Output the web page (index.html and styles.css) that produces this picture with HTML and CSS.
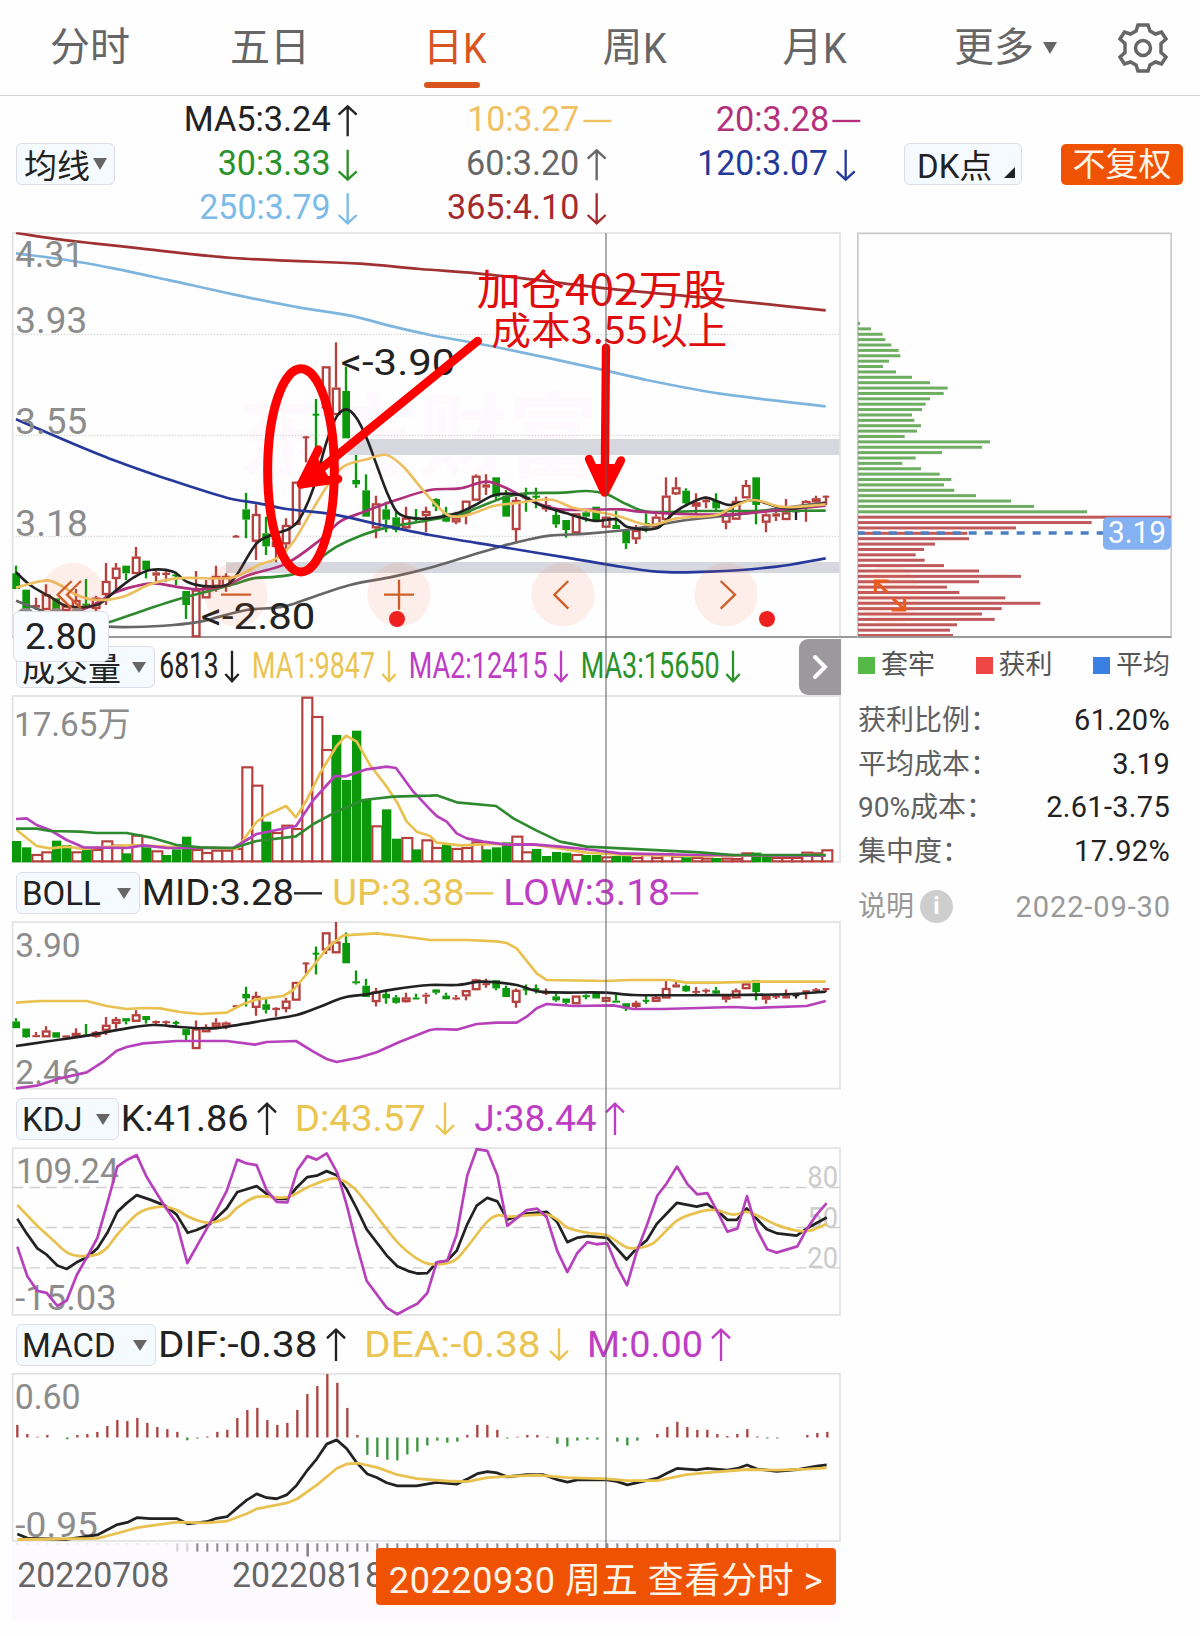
FILE: index.html
```html
<!DOCTYPE html>
<html lang="zh-CN">
<head>
	<meta charset="utf-8">
	<title>日K</title>
	<link rel="stylesheet" href="styles.css">
</head>
<body>
	<!-- arrows shared by all the legends -->
	<svg class="defs">
		<defs>
			<g id="up"><path d="M0 0V92M-27 27L0 2L27 27" /></g>
			<g id="down"><path d="M0 0V92M-27 65L0 90L27 65" /></g>
			<g id="downs"><path d="M0 0V94M-20 70L0 92L20 70" /></g>
			<g id="dash"><path d="M0 0H84" /></g>
		</defs>
	</svg>

	<nav class="tabs">
		<a class="tab">分时</a>
		<a class="tab">五日</a>
		<a class="tab active">日<span class="k">K</span></a>
		<a class="tab">周<span class="k">K</span></a>
		<a class="tab">月<span class="k">K</span></a>
		<a class="tab">更多<i class="caret small"></i></a>
		<a class="tab">
			<svg class="gear" viewBox="-25 -25 50 50">
				<path d="M-5 -23H5L7 -17L12.500 -14L18.500 -16L23 -9L18 -4.500V4.500L23 9L18.500 16L12.500 14L7 17L5 23H-5L-7 17L-12.500 14L-18.500 16L-23 9L-18 4.500V-4.500L-23 -9L-18.500 -16L-12.500 -14L-7 -17Z" />
				<circle r="7.500" />
			</svg>
		</a>
	</nav>

	<header class="ma_bar">
		<button class="pick ma_pick">均线<i class="caret"></i></button>
		<svg class="ma_legend" viewBox="345 288 2367 411">
			<g class="legend">
				<g class="black"><text x="551" y="394" textLength="441">MA5:3.24</text><use href="#up" x="1043" y="317" /></g>
				<g class="green"><text x="653" y="526" textLength="339">30:3.33</text><use href="#down" x="1043" y="449" /></g>
				<g class="sky"><text x="598" y="657" textLength="394">250:3.79</text><use href="#down" x="1043" y="580" /></g>
				<g class="orange"><text x="1402" y="394" textLength="336">10:3.27</text><use href="#dash" x="1750" y="363" /></g>
				<g class="gray"><text x="1398" y="526" textLength="340">60:3.20</text><use href="#up" x="1790" y="449" /></g>
				<g class="brown"><text x="1341" y="657" textLength="397">365:4.10</text><use href="#down" x="1790" y="580" /></g>
				<g class="pink"><text x="2147" y="394" textLength="341">20:3.28</text><use href="#dash" x="2497" y="363" /></g>
				<g class="navy"><text x="2092" y="526" textLength="392">120:3.07</text><use href="#down" x="2537" y="449" /></g>
			</g>
		</svg>
		<button class="pick dk">DK点<i class="corner"></i></button>
		<button class="fq">不复权</button>
	</header>

	<div class="content">
		<div class="left">
			<svg id="main" width="842" height="406" viewBox="0 21 2526 1218"></svg>

			<div class="row">
				<button class="pick w_vol">成交量<i class="caret"></i></button>
				<svg width="687" height="57" viewBox="465 -6 2061 171">
					<g class="legend">
						<g class="black"><text x="478" y="115" textLength="178">6813</text><use href="#downs" x="696" y="32" /></g>
						<g class="yellow"><text x="756" y="115" textLength="369">MA1:9847</text><use href="#downs" x="1167" y="32" /></g>
						<g class="purple"><text x="1226" y="115" textLength="417">MA2:12415</text><use href="#downs" x="1683" y="32" /></g>
						<g class="green"><text x="1742" y="115" textLength="417">MA3:15650</text><use href="#downs" x="2199" y="32" /></g>
					</g>
				</svg>
				<button class="more"><svg width="16" height="28" viewBox="0 0 16 28"><path d="M3 4L13 14L3 24" /></svg></button>
				<div class="price_tip">2.80</div>
			</div>
			<svg id="vol" width="842" height="169" viewBox="0 165 2526 507"></svg>

			<div class="row">
				<button class="pick w_boll">BOLL<i class="caret"></i></button>
				<svg width="702" height="57" viewBox="420 672 2106 171">
					<g class="legend">
						<g class="black"><text x="425" y="794" textLength="457">MID:3.28</text><use href="#dash" x="882" y="760" /></g>
						<g class="yellow"><text x="997" y="794" textLength="397">UP:3.38</text><use href="#dash" x="1396" y="760" /></g>
						<g class="purple"><text x="1510" y="794" textLength="500">LOW:3.18</text><use href="#dash" x="2011" y="760" /></g>
					</g>
				</svg>
			</div>
			<svg id="boll" width="842" height="169" viewBox="0 843 2526 507"></svg>

			<div class="row">
				<button class="pick w_kdj">KDJ<i class="caret"></i></button>
				<svg width="723" height="57" viewBox="357 0 2169 163.700" preserveAspectRatio="none">
					<g class="legend">
						<g class="black"><text x="362" y="118" textLength="384">K:41.86</text><use href="#up" x="801" y="37" /></g>
						<g class="yellow"><text x="884" y="118" textLength="394">D:43.57</text><use href="#down" x="1335" y="36" /></g>
						<g class="purple"><text x="1423" y="118" textLength="367">J:38.44</text><use href="#up" x="1845" y="37" /></g>
					</g>
				</svg>
			</div>
			<svg id="kdj" width="842" height="169" viewBox="0 163.700 2526 485.400" preserveAspectRatio="none"></svg>

			<div class="row">
				<button class="pick w_macd">MACD<i class="caret"></i></button>
				<svg width="686" height="57" viewBox="468 649.100 2058 163.700" preserveAspectRatio="none">
					<g class="legend">
						<g class="black"><text x="474" y="766" textLength="478">DIF:-0.38</text><use href="#up" x="1008" y="686" /></g>
						<g class="yellow"><text x="1092" y="766" textLength="530">DEA:-0.38</text><use href="#down" x="1677" y="684" /></g>
						<g class="purple"><text x="1761" y="766" textLength="348">M:0.00</text><use href="#up" x="2163" y="686" /></g>
					</g>
				</svg>
			</div>
			<svg id="macd" width="842" height="169" viewBox="0 812.800 2526 485.400" preserveAspectRatio="none"></svg>

			<div class="axis_box">
				<svg id="axis" width="842" height="80" viewBox="0 1298.200 2526 229.800" preserveAspectRatio="none"></svg>
				<button class="goto">20220930 周五 查看分时 &gt;</button>
			</div>
			<div class="cross"></div>
		</div>

		<aside class="right">
			<svg id="chips" width="316" height="406" viewBox="51 21 948 1218"></svg>
			<div class="keys">
				<span><i class="sq sq_g"></i>套牢</span>
				<span><i class="sq sq_r"></i>获利</span>
				<span><i class="sq sq_b"></i>平均</span>
			</div>
			<dl class="stats">
				<dt>获利比例：</dt><dd>61.20%</dd>
				<dt>平均成本：</dt><dd>3.19</dd>
				<dt>90%成本：</dt><dd>2.61-3.75</dd>
				<dt>集中度：</dt><dd>17.92%</dd>
			</dl>
			<div class="note">
				<span>说明<i class="info">i</i></span>
				<span class="day">2022-09-30</span>
			</div>
		</aside>
	</div>
	<script src="charts.js"></script>
</body>
</html>
```
FILE: styles.css
```css
* {
	box-sizing: border-box;
}
body {
	margin: 0;
	width: 1200px;
	height: 1636px;
	background: #fefefe;
	font-family: Roboto, "Noto Sans CJK SC", sans-serif;
	color: #222;
	overflow: hidden;
}
svg {
	display: block;
	flex: none;
}
button {
	font-family: inherit;
	padding: 0;
	border: 0;
	white-space: nowrap;
}
.defs {
	position: absolute;
	width: 0;
	height: 0;
}
.defs path {
	fill: none;
	stroke: currentColor;
	stroke-width: 7;
}

/* tabs */
.tabs {
	display: grid;
	grid-template-columns: 180px 180px 190px 169px 191px 191px 84px;
	height: 96px;
	border-bottom: 1px solid #d4d4d4;
}
.tab {
	position: relative;
	display: flex;
	align-items: center;
	justify-content: center;
	height: 95px;
	font-size: 40px;
	line-height: 60px;
	color: #666;
}
.k {
	width: 24px;
	font-size: 43px;
	transform: scaleX(.88);
	transform-origin: left center;
}
.active {
	color: #d9541e;
}
.active::after {
	content: "";
	position: absolute;
	left: 64px;
	top: 82px;
	width: 56px;
	height: 6px;
	border-radius: 3px;
	background: #d9541e;
}
.gear {
	width: 50px;
	height: 50px;
	fill: none;
	stroke: #666;
	stroke-width: 3.5;
}
.caret {
	display: inline-block;
	border: 7px solid transparent;
	border-top: 12px solid #666;
	border-bottom: 0;
}
.caret.small {
	margin-left: 9px;
}

/* MA bar */
.ma_bar {
	display: flex;
	height: 136px;
	padding-left: 16px;
}
.pick {
	display: flex;
	align-items: center;
	border: 1px solid #dcdde8;
	border-radius: 6px;
	background: #f5faff;
	color: #222;
}
.ma_pick {
	width: 99px;
	height: 42px;
	margin-top: 47px;
	padding: 0 0 1px 7px;
	font-size: 33px;
}
.ma_pick .caret {
	margin-left: 3px;
}
.ma_legend {
	width: 789px;
	height: 137px;
}
.dk {
	position: relative;
	width: 118px;
	height: 42px;
	margin-top: 47px;
	padding: 0 0 1px 12px;
	font-size: 33px;
}
.corner {
	position: absolute;
	right: 6px;
	bottom: 6px;
	border-left: 11px solid transparent;
	border-bottom: 11px solid #222;
}
.fq {
	width: 122px;
	height: 41px;
	margin: 48px 0 0 39px;
	border-radius: 5px;
	background: #f05204;
	color: #fff4e8;
	font-size: 33px;
	line-height: 38px;
}

/* legends */
.legend {
	font-size: 108px;
}
.ma_legend .legend {
	font-size: 104px;
}
.legend text {
	fill: currentColor;
}
.black { color: #222; }
.green { color: #2a922a; }
.sky { color: #7cbbe8; }
.orange { color: #f0c063; }
.gray { color: #666; }
.brown { color: #a52a2e; }
.pink { color: #b5307c; }
.navy { color: #25399a; }
.yellow { color: #ebc552; }
.purple { color: #bd3ec4; }

/* charts */
.content {
	display: grid;
	grid-template-columns: 857px 316px;
}
.left {
	position: relative;
	width: 842px;
}
.row {
	position: relative;
	display: flex;
	height: 57px;
	padding-left: 16px;
}
.row .pick {
	height: 42px;
	margin-top: 8px;
	padding: 0 8px 0 5px;
	justify-content: space-between;
	font-size: 33px;
}
.row .w_vol { width: 139px; }
.row .w_boll { width: 124px; }
.row .w_kdj { width: 103px; }
.row .w_macd { width: 140px; }
.row .caret {
	border-width: 11px 7px 0;
}
.more {
	position: absolute;
	right: 1px;
	top: 1px;
	width: 42px;
	height: 56px;
	padding-left: 13px;
	border-radius: 9px 0 0 9px;
	background: #9b999c;
	z-index: 2;
}
.more path {
	fill: none;
	stroke: #fff;
	stroke-width: 4;
	stroke-linecap: round;
}
.price_tip {
	position: absolute;
	left: 13px;
	top: -27px;
	width: 96px;
	height: 51px;
	border: 1px solid #dcdde8;
	border-radius: 6px;
	background: #f8fbff;
	font-size: 37px;
	line-height: 50px;
	text-align: center;
	z-index: 2;
}
.cross {
	position: absolute;
	left: 605px;
	top: 1px;
	width: 2px;
	height: 1316px;
	background: rgba(90, 90, 90, .5);
}
#main {
	overflow: visible;
}
.scale {
	fill: #8c8c8c;
	font-size: 102px;
}
.level {
	fill: #ccc;
	font-size: 84px;
}
.price {
	fill: #222;
	font-size: 108px;
}
.date {
	fill: #666;
	font-size: 101px;
}
.mark {
	fill: #df0d0d;
	font-family: "Noto Sans CJK SC", sans-serif;
}
.watermark {
	fill: #fef9fd;
	font-family: "Noto Sans CJK SC", sans-serif;
	font-size: 275px;
	font-weight: 700;
}
.axis_box {
	position: relative;
	height: 80px;
}
.goto {
	position: absolute;
	left: 376px;
	top: 6px;
	width: 460px;
	height: 57px;
	border-radius: 4px;
	background: #f05204;
	color: #fff4e8;
	font-size: 36px;
	letter-spacing: .6px;
	z-index: 2;
}

/* chips side */
.right {
	width: 316px;
}
.keys {
	display: flex;
	justify-content: space-between;
	padding: 8px 3px 0 1px;
	font-size: 27px;
	line-height: 38px;
	color: #555;
}
.sq {
	display: inline-block;
	width: 17px;
	height: 17px;
	margin-right: 6px;
}
.sq_g { background: #55b948; }
.sq_r { background: #ee4545; }
.sq_b { background: #3a7fe2; }
.stats {
	display: grid;
	grid-template-columns: 1fr auto;
	margin: 15px 3px 0 1px;
	font-size: 28px;
	line-height: 43.7px;
	color: #606060;
}
.stats dd {
	margin: 0;
	color: #222;
	font-size: 29px;
	letter-spacing: .3px;
	text-align: right;
}
.note {
	display: flex;
	justify-content: space-between;
	margin: 11px 2px 0 1px;
	font-size: 28px;
	line-height: 44px;
	color: #999;
}
.note span {
	display: flex;
	align-items: center;
}
.note .day {
	font-size: 29px;
	letter-spacing: .9px;
}
.info {
	width: 33px;
	height: 33px;
	margin-left: 6px;
	border-radius: 50%;
	background: #cecece;
	color: #fff;
	font-size: 24px;
	font-style: normal;
	font-weight: 700;
	line-height: 33px;
	text-align: center;
}
```
FILE: charts.js
```js
// all coordinates are in chart units, 3 units = 1px
var RED = "#b5403e", GREEN = "#0b990b", BLACK = "#222", YELLOW = "#e8c14f", PURPLE = "#b740bb", DGREEN = "#2f8a2f";

// high, body top, body bottom, low, colour
var candles = [
	[1022,1045,1092,1092,"g"],[1094,1094,1155,1160,"g"],[1118,1140,1148,1155,"r"],[1078,1108,1155,1155,"r"],
	[1120,1120,1158,1158,"g"],[1140,1142,1158,1158,"r"],[1092,1125,1150,1162,"r"],[1062,1136,1140,1142,"g"],
	[1112,1118,1152,1158,"r"],[1014,1068,1110,1140,"r"],[1014,1028,1062,1095,"r"],[1022,1022,1045,1065,"g"],
	[966,995,1047,1047,"r"],[1007,1007,1035,1060,"g"],[1038,1042,1052,1070,"r"],[1038,1043,1050,1070,"r"],
	[1040,1048,1052,1080,"g"],[1098,1098,1140,1182,"g"],[1038,1094,1237,1237,"r"],[1065,1083,1120,1120,"r"],
	[1022,1053,1085,1100,"r"],[1045,1053,1085,1100,"r"],[930,932,932,934,"r"],[804,853,884,940,"g"],
	[838,867,950,1005,"r"],[875,925,964,990,"g"],[945,950,966,1012,"r"],[880,900,958,980,"r"],
	[770,770,900,900,"r"],[634,634,634,712,"r"],[522,566,566,718,"g"],[424,424,550,575,"r"],
	[352,488,570,570,"r"],[425,498,640,640,"g"],[690,765,778,788,"g"],[748,796,875,875,"g"],
	[812,835,910,940,"r"],[830,853,884,922,"g"],[860,877,915,922,"g"],[845,878,910,912,"r"],
	[852,878,882,888,"g"],[845,858,873,922,"r"],[820,822,845,858,"g"],[845,865,890,892,"g"],
	[860,878,892,898,"r"],[827,827,870,898,"r"],[748,752,827,827,"r"],[748,778,788,810,"r"],
	[757,757,815,828,"g"],[795,812,875,875,"g"],[815,825,915,950,"r"],[788,815,818,860,"g"],
	[788,812,815,850,"g"],[815,840,853,860,"r"],[850,870,898,908,"g"],[885,885,915,938,"g"],
	[865,865,925,925,"r"],[855,862,875,890,"g"],[845,845,885,885,"g"],[875,875,908,908,"r"],
	[858,900,912,912,"g"],[918,918,955,972,"g"],[900,915,943,957,"r"],[865,894,897,922,"g"],
	[868,875,908,908,"r"],[757,812,885,885,"r"],[757,787,808,810,"r"],[790,797,835,840,"g"],
	[805,832,845,868,"r"],[815,824,832,850,"r"],[805,828,850,860,"g"],[860,868,893,913,"r"],
	[815,828,884,884,"r"],[765,780,820,820,"r"],[757,757,840,898,"g"],[865,868,893,922,"r"],
	[850,865,875,888,"r"],[822,862,885,885,"r"],[848,856,858,885,"k"],[826,828,845,890,"r"],
	[812,820,832,840,"r"],[812,812,812,840,"r"]
];

// bar tops
var vols = "g603 g622 r643 r635 g602 g615 r635 g628 r628 r602 r615 g640 r585 g622 r632 g645 g628 g590 r628 r637 r630 r630 r625 r380 r435 g545 r577 r555 r565 r171 r229 r328 g285 g420 g272 g477 r557 g508 g596 r592 g628 r599 r622 g613 r625 r622 r605 g628 g622 g607 r588 r635 g627 g648 g636 g638 r643 g645 g645 r650 g648 g648 r652 r642 r652 r640 r648 g652 r652 r654 g654 r654 r655 r638 g638 g648 r652 r652 r652 r636 r638 r629".split(" ");

// bar ends, zero line is 998
var macds = [962,988,996,991,998,1003,991,988,982,965,948,951,942,956,968,974,982,1006,1001,995,982,976,942,919,913,948,962,956,919,873,850,816,841,913,991,1048,1054,1062,1064,1047,1039,1021,1007,1013,1010,991,962,962,976,1001,996,991,991,996,1016,1024,1007,1004,1004,998,1010,1021,1007,998,988,968,953,968,976,976,988,994,988,974,995,1001,1001,998,998,991,985,982];

var greens = [60,93,128,136,154,176,181,147,129,168,216,270,323,311,270,257,246,216,223,243,231,194,450,426,306,227,187,243,299,334,312,343,408,513,582,741];
var reds = [993,755,528,382,387,285,252,227,254,312,417,543,417,321,358,496,601,485,426,464,351,330,339];

function rect(x, y, w, h, fill, extra) {
	return '<rect x="' + x + '" y="' + y + '" width="' + w + '" height="' + h + '" fill="' + fill + '" ' + (extra || "") + '/>';
}
function path(d, color, w, extra) {
	return '<path d="' + d + '" fill="none" stroke="' + color + '" stroke-width="' + w + '" ' + (extra || "") + '/>';
}
function text(cls, x1, x2, y, str, extra) {
	return '<text class="' + cls + '" x="' + x1 + '" y="' + y + '" textLength="' + (x2 - x1) + '" lengthAdjust="spacingAndGlyphs" ' + (extra || "") + '>' + str + '</text>';
}
function frame(y, h) {
	return rect(38, y, 2482, h, "none", 'stroke="#e2e2e4" stroke-width="5"');
}
function line(pts, color) {
	return '<polyline points="' + pts + '" fill="none" stroke="' + color + '" stroke-width="8" stroke-linejoin="round"/>';
}
// same as line() but rounded through the points
function curve(pts, color) {
	var p = pts.split(" ").map(function(s) { return s.split(",").map(Number); });
	var d = "M" + p[0];
	for (var i = 0; i < p.length - 1; i++) {
		var a = p[i - 1] || p[i], b = p[i], c = p[i + 1], e = p[i + 2] || c;
		var k = (c[0] - b[0]) / 3;
		var s1 = (c[1] - a[1]) / (c[0] - a[0]);
		var s2 = (e[1] - b[1]) / (e[0] - b[0]);
		d += "C" + (b[0] + k) + " " + (b[1] + k * s1) + " " + (c[0] - k) + " " + (c[1] - k * s2) + " " + c;
	}
	return path(d, color, 8);
}
function drawCandles(f) {
	var out = "";
	candles.forEach(function(c, i) {
		var x = 48 + 30 * i;
		var y = c.slice(0, 4).map(f);
		var color = c[4] == "r" ? RED : c[4] == "g" ? GREEN : BLACK;
		var h = y[2] - y[1];
		out += path("M" + x + " " + y[0] + "V" + y[1] + "M" + x + " " + y[2] + "V" + y[3], color, 7);
		if (c[4] == "r" && h > 10) {
			out += rect(x - 9.5, y[1] + 3, 20, h - 6, "none", 'stroke="' + color + '" stroke-width="7"');
		} else {
			out += rect(x - (h < 2 ? 10 : 11), y[1], h < 2 ? 20 : 23, Math.max(h, 6), color);
		}
	});
	return out;
}
function put(id, html) {
	document.getElementById(id).innerHTML = html;
}

// main chart
var s = '<clipPath id="mc"><rect x="36" y="22" width="2486" height="1217"/></clipPath>';
s += text("watermark", 715, 1795, 735, "东方财富");
[328, 631, 934].forEach(function(y) {
	s += path("M38 " + y + "H2520", "#ccc", 3, 'stroke-dasharray="4 5"');
});
s += rect(1045, 642, 1475, 48, "#d7d7df") + rect(678, 1011, 1842, 33, "#d7d7df");
s += frame(24, 1212);
s += path("M38 1236H2572", "#9a9a9a", 6);
s += '<g clip-path="url(#mc)">' + drawCandles(function(y) { return y; });
s += curve("48,24 160,41 280,55 420,70 560,86 700,99 860,107 1080,116 1260,132 1460,148 1818,190 2130,220 2477,256", "#a03032");
s += curve("48,85 200,105 340,130 500,164 700,208 900,248 1050,272 1180,305 1290,330 1440,357 1640,398 1818,437 1940,465 2160,506 2477,544", "#7db5de");
s += curve("48,1127 120,1155 200,1192 320,1205 400,1206 520,1200 600,1190 740,1155 850,1145 950,1112 1050,1080 1180,1055 1290,1028 1400,995 1500,965 1580,945 1650,932 1760,926 1900,912 2060,885 2200,870 2340,850 2477,833", "#666");
s += curve("230,1220 326,1192 420,1160 510,1130 600,1105 700,1078 760,1060 830,1055 900,1042 960,1000 1010,965 1080,933 1160,908 1290,885 1380,868 1440,845 1520,815 1580,805 1690,803 1760,798 1820,808 1880,838 1940,860 2100,858 2250,858 2477,857", DGREEN);
s += curve("230,1160 280,1140 340,1105 400,1085 460,1075 540,1087 600,1093 680,1080 740,1052 860,1015 960,945 1020,890 1080,865 1180,828 1290,795 1380,790 1460,770 1520,790 1600,830 1680,853 1860,853 1920,860 2040,867 2200,868 2340,855 2477,842", "#b0307e");
s += curve("48,1042 90,1080 150,1115 200,1143 290,1140 350,1095 400,1058 450,1035 520,1040 560,1070 610,1083 680,1080 710,1050 770,955 830,925 870,910 900,880 940,790 980,650 1010,575 1040,553 1070,580 1100,640 1130,720 1160,800 1190,860 1230,878 1290,880 1370,865 1420,843 1485,810 1560,810 1620,840 1700,865 1750,880 1790,888 1850,883 1880,905 1970,910 2020,865 2060,840 2115,818 2150,828 2190,840 2260,825 2330,845 2380,850 2477,835", BLACK);
s += curve("48,1088 140,1066 180,1080 230,1110 290,1125 370,1115 450,1078 530,1060 680,1060 720,1050 780,1018 830,1000 880,950 940,850 990,770 1030,725 1100,703 1160,690 1210,725 1260,785 1290,820 1340,868 1380,875 1420,865 1480,843 1540,835 1620,825 1660,825 1720,848 1800,862 1860,875 1920,895 1960,900 2030,880 2150,870 2200,845 2260,825 2340,845 2400,845 2477,838", "#edbf60");
s += curve("48,583 200,648 340,705 490,758 680,818 780,836 860,852 1000,868 1130,897 1290,930 1500,965 1700,998 1820,1018 1970,1040 2130,1040 2330,1025 2477,1000", "#26389a");
s += '</g>';
s += text("price", 46, 252, 127, "4.31", 'style="fill:#8c8c8c"');
s += text("price", 46, 262, 325, "3.93", 'style="fill:#8c8c8c"');
s += text("price", 46, 262, 628, "3.55", 'style="fill:#8c8c8c"');
s += text("price", 46, 264, 932, "3.18", 'style="fill:#8c8c8c"');
s += text("price", 46, 264, 1226, "2.80", 'style="fill:#8c8c8c"');
s += text("price", 1022, 1366, 450, "&lt;-3.90");
s += text("price", 602, 946, 1212, "&lt;-2.80");
// round buttons
[218, 708, 1197, 1689, 2178].forEach(function(x) {
	s += '<circle cx="' + x + '" cy="1109" r="95" fill="#fa6432" fill-opacity=".1"/>';
});
s += path("M215 1068L173 1109L215 1150M243 1068L201 1109L243 1150M663 1109H753M1152 1109H1242M1197 1064V1154M1705 1068L1663 1109L1705 1151M2162 1068L2205 1109L2162 1151", "#cf5f2a", 7);
s += '<circle cx="1191" cy="1182" r="24" fill="#ee2020"/><circle cx="2301" cy="1182" r="24" fill="#ee2020"/>';
// hand-drawn marks
s += '<ellipse cx="903" cy="736" rx="100" ry="305" fill="none" stroke="#fe0000" stroke-width="27"/>';
s += path("M1433 348L905 778M955 674L903 778L1014 762", "#fe0000", 26, 'stroke-linecap="round" stroke-linejoin="round"');
s += path("M1818 368L1814 800M1767 702L1814 803L1863 706", "#fe0000", 25, 'stroke-linecap="round" stroke-linejoin="round"');
s += path("M903 778L950 700L985 760ZM1814 803L1785 720H1840Z", "#fe0000", 6, 'style="fill:#fe0000"');
s += text("mark", 1430, 2180, 241, "加仓402万股", 'font-size="125"');
s += text("mark", 1474, 2182, 358, "成本3.55以上", 'font-size="114"');
put("main", s);

// volume
s = frame(168, 498) + text("scale", 42, 392, 287, "17.65万");
vols.forEach(function(v, i) {
	var y = Number(v.slice(1)), x = 50 + 30 * i;
	if (v[0] == "g") s += rect(x - 14, y, 28, 667 - y, GREEN);
	else s += rect(x - 13, y + 2, 30, 662 - y, "#fff", 'stroke="' + RED + '" stroke-width="6.5"');
});
s += line("50,570 110,618 150,625 200,620 250,627 330,620 400,615 500,620 600,622 710,627 770,545 800,525 858,498 888,532 920,480 960,400 1010,318 1038,287 1070,305 1110,375 1160,440 1190,485 1220,545 1250,575 1290,588 1310,608 1380,616 1480,612 1600,614 1680,625 1760,638 1880,645 2100,648 2477,645", YELLOW);
s += line("48,537 80,535 110,555 150,570 200,600 250,622 380,624 430,616 500,624 700,624 770,582 830,570 888,558 940,480 1005,408 1038,409 1100,388 1160,380 1188,384 1240,455 1290,508 1310,528 1340,545 1370,580 1400,595 1450,605 1520,614 1600,613 1680,620 1780,630 1860,640 2100,645 2477,647", PURPLE);
s += line("48,566 110,566 150,573 240,575 290,579 380,579 450,592 530,615 600,622 700,624 770,603 888,589 940,552 1010,515 1090,480 1180,470 1290,467 1310,466 1370,487 1488,498 1540,535 1610,572 1680,605 1760,620 2100,637 2200,645 2477,645", DGREEN);
put("vol", s);

// boll, same candles on a smaller price scale
s = frame(846, 500) + text("scale", 46, 242, 952, "3.90") + text("scale", 46, 242, 1333, "2.46");
s += drawCandles(function(y) { return 835.6 + (y - 328) * 0.4307; });
s += line("48,1088 120,1083 260,1083 320,1098 380,1107 430,1104 480,1105 540,1116 600,1122 680,1118 730,1092 770,1078 850,1068 880,1050 930,990 985,920 1030,886 1130,880 1200,888 1290,900 1400,900 1490,904 1520,909 1550,925 1610,1000 1640,1020 1820,1023 1890,1020 2010,1020 2060,1028 2150,1028 2270,1025 2477,1025", YELLOW);
s += curve("48,1218 150,1203 260,1187 380,1165 460,1155 540,1161 640,1165 700,1157 800,1140 890,1125 960,1100 1030,1073 1100,1063 1180,1048 1290,1035 1370,1035 1440,1025 1490,1027 1550,1035 1620,1055 1820,1058 1900,1065 2200,1065 2380,1062 2477,1055", BLACK);
s += line("48,1345 110,1337 180,1315 260,1297 310,1265 350,1232 380,1221 430,1210 530,1203 680,1203 765,1214 800,1206 888,1203 940,1235 980,1257 1010,1266 1080,1252 1130,1237 1200,1205 1290,1170 1310,1167 1370,1169 1430,1152 1490,1148 1550,1148 1580,1130 1610,1105 1640,1092 1720,1098 1840,1096 1900,1107 1990,1107 2200,1101 2260,1104 2420,1098 2477,1083", PURPLE);
put("boll", s);

// kdj
s = frame(167, 479);
[280, 395, 511].forEach(function(y) {
	s += path("M38 " + y + "H2520", "#cfcfcf", 4, 'stroke-dasharray="32 18"');
});
s += text("scale", 48, 356, 268, "109.24") + text("scale", 46, 350, 633, "-15.03");
s += text("level", 2422, 2514, 279, "80") + text("level", 2422, 2514, 397, "50") + text("level", 2422, 2514, 511, "20");
s += line("52,370 80,412 112,455 140,473 172,504 200,514 230,495 262,480 292,455 322,410 352,350 380,325 410,302 450,315 495,332 530,358 563,410 590,402 630,385 680,340 712,293 740,285 770,276 800,298 830,313 862,313 890,280 922,250 950,246 980,233 1010,245 1040,285 1070,340 1100,400 1160,475 1192,506 1225,520 1252,527 1282,526 1310,495 1340,492 1370,462 1402,385 1430,332 1462,310 1492,320 1522,372 1580,355 1640,350 1672,380 1702,437 1730,425 1762,420 1822,425 1880,487 1910,455 1940,432 1970,385 2031,324 2090,335 2122,328 2150,345 2182,373 2210,373 2240,340 2270,370 2300,400 2332,412 2390,418 2420,398 2480,366", BLACK);
s += curve("52,330 112,390 160,432 202,467 240,477 292,472 322,452 352,415 412,356 450,340 490,335 530,345 563,363 600,377 632,381 680,367 712,338 770,307 862,308 922,280 980,258 1015,255 1060,280 1100,325 1192,437 1252,485 1290,500 1340,498 1370,485 1402,450 1462,378 1492,360 1522,364 1640,358 1672,372 1702,395 1762,410 1822,418 1880,452 1920,453 1960,440 2031,375 2090,352 2122,345 2150,345 2200,358 2240,350 2270,360 2332,388 2390,404 2430,404 2480,385", YELLOW);
s += line("52,450 82,535 112,577 140,583 172,620 200,605 230,532 262,478 292,425 322,325 352,220 382,200 410,187 440,250 495,335 530,383 562,497 632,378 680,290 712,200 740,211 770,216 800,288 830,321 862,323 892,230 922,190 950,200 980,182 1012,238 1040,330 1070,445 1100,548 1160,625 1192,644 1222,628 1252,614 1282,583 1310,495 1342,490 1370,415 1402,245 1430,170 1462,175 1492,245 1522,390 1580,345 1612,341 1640,365 1672,463 1702,523 1732,468 1762,437 1790,443 1822,440 1850,505 1881,561 1910,465 1940,390 1972,303 2000,268 2031,220 2062,270 2092,300 2122,296 2150,345 2182,407 2212,398 2241,305 2270,400 2302,458 2330,467 2392,449 2420,400 2450,358 2480,325", PURPLE);
put("kdj", s);

// macd
s = frame(815, 480) + text("scale", 44, 242, 917, "0.60") + text("scale", 46, 294, 1283, "-0.95");
macds.forEach(function(y, i) {
	if (y == 998) return;
	s += rect(48.5 + 30 * i, Math.min(y, 998), 7, Math.abs(y - 998), y < 998 ? "#aa4444" : "#3c9440");
});
s += line("52,1275 82,1287 200,1291 292,1278 352,1248 382,1242 412,1228 450,1231 530,1231 563,1246 620,1240 650,1230 682,1225 712,1200 740,1178 770,1160 800,1171 830,1174 860,1163 890,1135 922,1092 950,1060 980,1017 1010,1005 1040,1030 1070,1070 1102,1103 1130,1113 1160,1128 1192,1137 1250,1137 1310,1127 1370,1132 1402,1117 1432,1102 1462,1096 1492,1100 1522,1111 1580,1105 1630,1105 1672,1119 1702,1126 1732,1120 1820,1120 1850,1124 1882,1134 1972,1115 2002,1100 2031,1087 2090,1091 2122,1087 2182,1092 2212,1087 2241,1077 2272,1089 2330,1095 2392,1090 2450,1080 2480,1077", BLACK);
s += line("52,1291 292,1288 352,1273 412,1257 530,1241 620,1243 682,1238 740,1217 770,1203 862,1186 892,1174 950,1135 1010,1087 1040,1074 1075,1072 1130,1084 1192,1105 1250,1116 1340,1123 1402,1125 1462,1113 1522,1110 1612,1106 1702,1113 1822,1117 1882,1122 1972,1122 2060,1105 2122,1099 2241,1090 2330,1092 2420,1089 2480,1085", YELLOW);
put("macd", s);

// time axis
s = rect(36, 1300, 2484, 225, "#fdfaff");
for (var x = 52; x <= 2480; x += 30) {
	var major = x == 922 || x == 2122;
	var faint = x < 590 || x > 2300;
	if (x < 530) s += rect(x - 3, 1302, 6, 3, "#ddd");
	else s += rect(x - 3, 1302, major ? 8 : 6, major ? 38 : 24, faint ? "#d4d0d4" : "#8a888a");
}
s += text("date", 52, 508, 1428, "20220708") + text("date", 696, 1152, 1428, "20220818");
put("axis", s);

// chip distribution
s = rect(53.5, 25, 940, 1211, "none", 'stroke="#c9c9c9" stroke-width="5"');
greens.concat(reds).forEach(function(end, i) {
	s += rect(54, 291 + 16.14 * i, end - 54, 9, i < greens.length ? "#6fad62" : "#c0595b");
});
s += path("M54 1236H994", "#9a9a9a", 6);
s += path("M54 924H790", "#4a7fc0", 10, 'stroke-dasharray="24 24" stroke-dashoffset="4"');
s += rect(789, 877, 204, 97, "#84b1f2", 'rx="14"');
s += text("price", 804, 978, 953, "3.19", 'style="fill:#fff;font-size:92px"');
s += '<circle cx="148" cy="1111" r="92" fill="#fa6432" fill-opacity=".08"/>';
s += path("M145 1068H106V1104M108 1070L142 1102M155 1155H194V1118M192 1152L158 1120", "#ea5a1c", 9);
put("chips", s);

document.querySelectorAll(".legend text").forEach(function(t) {
	t.setAttribute("lengthAdjust", "spacingAndGlyphs");
});
```
